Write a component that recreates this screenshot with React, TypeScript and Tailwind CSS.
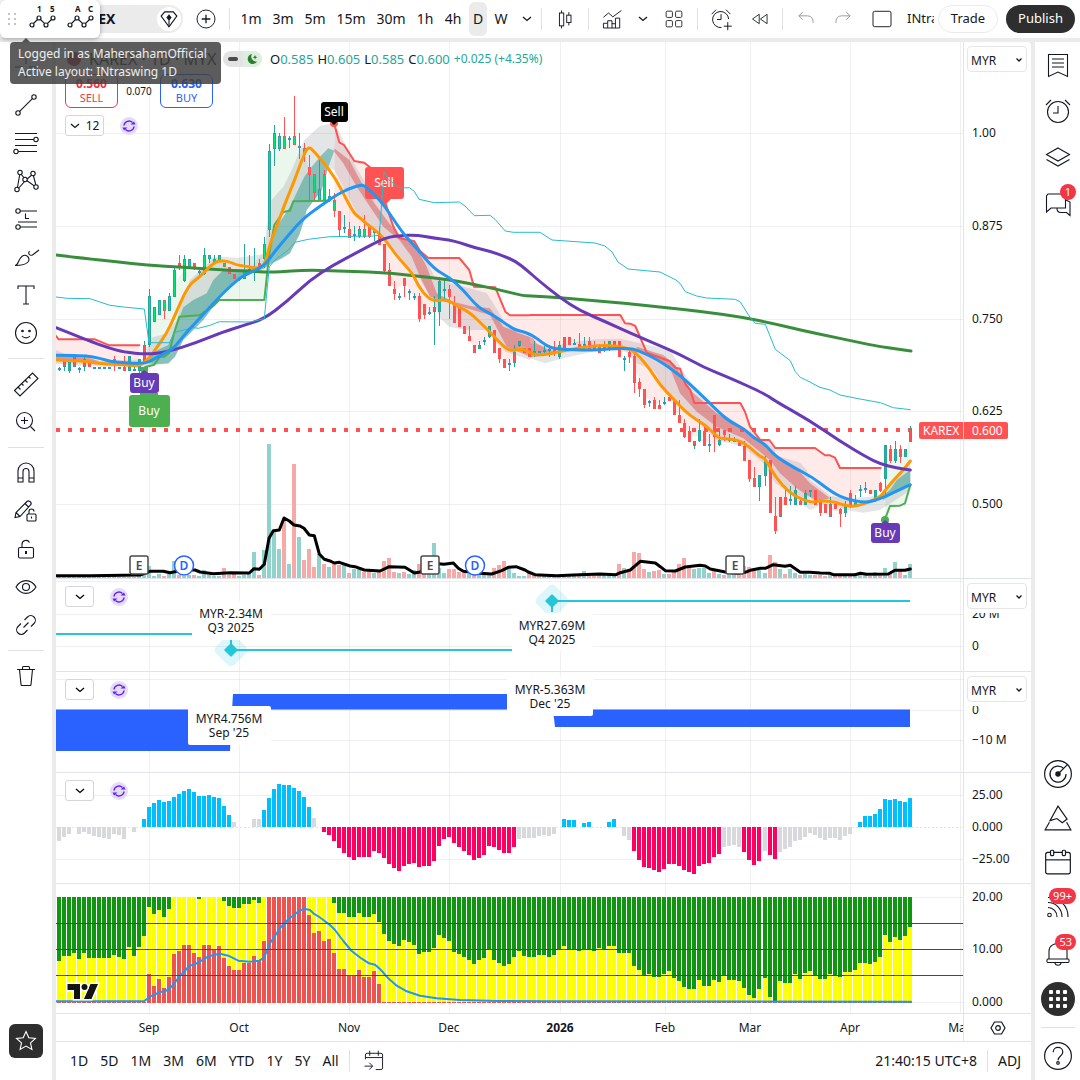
import type { ReactNode } from "react";

const BAR_COUNT = 171;

// Pixel column of a bar on the shared time scale
const barX = (i: number) => Math.floor(59.3 + i * 5.005);

// Points are stored in thirds of a pixel relative to an origin
function at(ox: number, oy: number, pts: string) {
  return pts
    .split(" ")
    .map(p => {
      const [x, y] = p.split(",").map(Number);
      return `${(ox + x / 3).toFixed(1)},${(oy + y / 3).toFixed(1)}`;
    })
    .join(" ");
}

const join = (...parts: string[]) => parts.join(" ");
const reverse = (pts: string) => pts.split(" ").reverse().join(" ");

const MONTHS = [
  { label: "Sep", x: 149 },
  { label: "Oct", x: 239 },
  { label: "Nov", x: 349 },
  { label: "Dec", x: 449 },
  { label: "2026", x: 560, bold: true },
  { label: "Feb", x: 665 },
  { label: "Mar", x: 750 },
  { label: "Apr", x: 850 },
  { label: "May", x: 960 },
];

// bar, high, low, body top, body bottom, border + fill (b = doji)
const CANDLES: { oy: number; rows: string }[] = [
  {
    oy: 230,
    rows: `0 412 424 413 418 b;1 388 424 388 412 tr;2 388 430 388 424 tr;3 375 412 378 412 tr;4 412 430 414 420 b;5 380 424 388 412 tr;6 400 412 400 412 rr;
7 411 413 410 414 b;8 411 413 410 414 b;9 411 413 410 414 b;10 411 413 410 414 b;11 378 422 388 400 rr;12 411 413 410 414 b;13 378 424 412 424 rr;14 378 424 378 424 tr;
15 404 424 416 420 b;16 388 430 388 424 tr;17 333 402 346 400 tr;18 178 352 198 346 tg;19 232 277 232 277 tg;20 210 256 210 256 tg;21 210 266 210 244 rg;22 190 244 198 244 tg;
23 112 200 121 200 tg;24 75 120 99 115 rr;25 75 155 87 154 tg;26 87 112 87 112 tg;27 99 120 99 112 rr;28 120 142 122 128 b;29 54 135 75 133 tg;30 75 99 76 88 tg;
31 75 102 87 99 tg;32 75 90 75 90 tg;33 99 112 99 112 rg;34 112 133 112 133 rg;35 133 146 133 146 rr;36 144 152 144 150 tg;37 42 146 121 146 tg;38 75 130 118 123 b;
39 54 153 110 115 b;40 87 120 99 112 rr;41 20 115 42 87 tg`,
  },
  {
    oy: 80,
    rows: `42 192 470 213 450 tg;43 135 258 160 206 tg;44 160 212 168 206 tg;45 112 208 168 206 rg;46 168 204 175 181 b;47 48 196 168 194 rg;48 158 236 199 205 b;49 190 246 205 226 rg;
50 226 360 260 284 rg;51 282 360 282 338 rg;52 236 362 328 362 tg;53 270 362 282 360 rg;54 328 366 348 362 tg;55 338 412 360 394 rg;56 394 470 394 450 rg;57 405 458 440 446 b;
58 425 474 447 473 rg;59 438 482 463 469 b;60 438 474 447 472 tg;61 405 474 447 472 rg;62 436 474 436 472 rg;63 447 482 447 458 tg;64 440 494 460 494 rg;65 492 582 492 572 rr;
66 548 617 570 617 rr;67 603 660 627 642 rr;68 638 660 647 653 b;69 594 650 594 618 rr;70 628 660 633 639 b;71 638 660 647 653 b;72 638 725 648 718 rr;73 672 718 672 706 rr;
74 682 706 697 703 b;75 648 795 682 695 tr;76 592 738 604 695 tr;77 600 660 627 633 b;78 616 716 628 652 rr;79 648 730 672 728 rr;80 682 740 682 740 rr;81 738 762 738 762 rr;
82 738 784 768 784 rr;83 795 818 795 818 rr;84 783 806 795 806 tr;85 772 795 781 787 b;86 738 774 738 772 tr;87 750 820 750 818 rr;88 804 850 804 838 rr;89 838 864 838 864 rr;
90 838 872 849 855 b;91 795 862 816 850 tr;92 783 802 783 797 tr;93 804 818 804 818 rr;94 804 830 804 830 rr`,
  },
  {
    oy: 280,
    rows: `95 183 230 213 219 b;96 213 219 213 219 b;97 198 220 210 216 b;98 196 230 207 213 b;99 183 228 205 218 rr;100 183 236 196 230 tr;101 170 216 172 214 tr;102 172 196 172 196 rr;
103 178 196 190 196 b;104 159 214 193 208 rr;105 172 208 193 199 b;106 172 214 183 208 rr;107 183 214 196 206 rr;108 193 220 198 218 rr;109 183 215 196 207 rr;110 183 214 183 207 tr;
111 183 210 183 207 tr;112 183 230 183 230 rr;113 228 272 233 239 b;114 205 248 216 230 rr;115 218 338 228 308 rr;116 294 350 306 328 rr;117 328 384 328 374 rr;118 360 382 363 369 b;
119 350 386 360 386 rr;120 360 386 374 386 rr;121 350 375 365 371 b;122 350 362 350 362 rr;123 360 406 360 406 rr;124 360 430 405 430 rr;125 418 474 430 472 rr;126 438 486 452 486 rr;
127 483 506 483 497 tr;128 418 486 450 484 tr;129 440 497 452 497 rr;130 462 516 491 497 b;131 405 516 405 472 rr;132 450 497 480 496 tr;133 450 482 450 465 rr;134 462 486 477 483 b;
135 472 486 479 485 b;136 482 497 482 497 rr;137 484 542 497 542 rr;138 540 605 540 597 rr;139 560 620 594 620 rr;140 585 662 585 620 tr;141 528 618 540 587 tr;142 540 700 540 698 rr;
143 652 762 708 752 rr;144 652 712 652 710 tr;145 618 675 652 674 rr;146 618 675 657 663 b;147 618 675 630 674 tr;148 652 675 664 674 rr;149 630 675 640 674 tr;150 630 650 631 637 b;
151 630 674 630 674 rr;152 664 708 664 698 rr`,
  },
  {
    oy: 380,
    rows: `153 372 400 372 400 rr;154 350 410 372 410 tr;155 372 388 372 388 rr;156 384 440 388 402 rr;157 362 412 375 398 tr;158 330 385 340 382 rr;159 345 375 362 374 tr;160 316 350 326 332 b;
161 306 340 325 331 b;162 330 342 330 342 rr;163 330 365 330 364 tr;164 305 335 308 332 rr;165 195 352 196 296 tr;166 195 250 208 242 rr;167 183 250 208 242 tr;168 195 250 208 232 rr;
169 206 230 208 230 tr;170 138 185 148 185 tr`,
  },
];

// Volume heights; negative values are down bars
const VOLUME = [
  1, 1, 1, 2, 1, 1, -1, 1, 1, 1, 1, -2, 1, -1, 1, 1, 2, 3, 12, 2, 4, -2, 4, 17, -3, 2, 3, -3, 2, 8, 3, 2, 2, -10, -3, -4, 2, 3, 4, 26, -3, 28,
  134, 46, 29, -58, 14, -114, 41, -18, -29, -11, 24, -14, 11, -14, -13, 13, -5, 9, 9, -6, -7, 5, -7, -17, -20, -6, 5, -6, 4, 8, -14, -6, 8, 35,
  10, 5, -9, -9, -6, -5, 4, -3, 3, 4, 4, -10, -13, -17, 10, 5, 2, 2, -5, -5, -3, 2, 2, -3, 2, 3, -3, 2, -3, 7, -3, -4, -5, 3, 5, 4, -14, 10,
  -8, -26, -25, -9, 6, -7, -8, 4, -4, -8, -14, -20, -10, 9, 10, 10, 5, -9, 4, -3, 3, 3, -6, -12, -11, -8, 8, 5, -23, -16, 9, -4, 9, 5, -3, 4,
  3, -3, -3, -2, 3, -3, -2, 4, -3, 3, 5, 3, -2, 6, -4, 10, -4, 16, -8, 3, 14,
];

const MOMENTUM = [
  -14, -10, -7, 0, -7, -5, -7, -9, -10, -11, -12, -7, -8, -12, 0, -5, 0, 8, 20, 24, 27, 25, 26, 30, 33, 36, 38, 35, 31, 31, 32, 30, 29, 21, 12,
  5, 0, 0, 0, 8, 8, 17, 29, 38, 43, 42, 42, 39, 36, 30, 20, 9, 0, -5, -8, -14, -21, -26, -30, -33, -30, -30, -30, -24, -26, -31, -37, -41, -44,
  -39, -37, -36, -40, -39, -39, -34, -19, -12, -10, -16, -20, -24, -28, -33, -31, -28, -19, -20, -23, -26, -26, -20, -12, -11, -11, -11, -9,
  -8, -9, -7, 0, 8, 7, 7, 0, 4, 5, 0, 0, 0, 5, 8, 0, -9, -13, -24, -33, -40, -41, -43, -45, -42, -37, -37, -39, -43, -45, -47, -39, -37, -36,
  -30, -27, -20, -19, -18, -20, -25, -33, -38, -34, -24, -28, -32, -25, -22, -20, -14, -13, -10, -6, -8, -11, -13, -11, -11, -13, -9, -7, 0, 5,
  11, 11, 13, 18, 28, 27, 28, 26, 25, 29,
];

// Ranges of bars drawn in the neutral colour
const NEUTRAL: [number, number][] = [
  [0, 16], [35, 40], [51, 52], [92, 99], [113, 114], [133, 136], [141, 141], [144, 158],
];

const BANKER_TOP = [
  573, 558, 558, 549, 567, 549, 564, 564, 564, 564, 564, 555, 561, 567, 531, 558, 531, 498, 411, 432, 420, 441, 417, 381, 381, 381, 381, 381,
  387, 381, 381, 381, 381, 393, 408, 414, 414, 402, 402, 390, 399, 381, 381, 381, 381, 381, 381, 381, 381, 381, 381, 381, 381, 381, 381, 399,
  429, 429, 441, 441, 429, 441, 441, 432, 456, 492, 513, 522, 528, 510, 516, 525, 552, 546, 546, 534, 495, 504, 513, 546, 552, 561, 570, 582,
  570, 564, 540, 570, 579, 588, 582, 561, 543, 558, 561, 561, 555, 555, 561, 555, 540, 528, 540, 540, 543, 540, 540, 543, 534, 540, 528, 528,
  549, 549, 549, 588, 600, 615, 612, 621, 621, 612, 603, 624, 633, 651, 657, 657, 630, 648, 648, 630, 636, 618, 630, 630, 633, 654, 675, 684,
  657, 624, 681, 693, 633, 639, 639, 612, 627, 609, 603, 615, 627, 627, 612, 615, 621, 606, 606, 600, 579, 579, 582, 576, 561, 495, 516, 501,
  510, 498, 471,
];

// Starts at bar 18, everything outside sits on the floor
const HOT_TOP = [
  612, 648, 627, 654, 621, 552, 543, 525, 525, 549, 561, 525, 525, 540, 528, 564, 588, 600, 600, 579, 579, 558, 573, 513, 381, 381, 381, 381,
  381, 381, 381, 381, 435, 489, 483, 513, 507, 549, 597, 597, 615, 615, 600, 621, 621, 603, 642,
];

const RED_TREND = join(
  at(240, 80, "285,140 298,187 312,195 343,243 373,248 390,262 415,310 440,380 460,440 478,474 523,484 540,513 565,534 658,534 688,570 702,620 766,622 796,695 810,706 870,706"),
  at(530, 280, "0,105 271,105 285,130 301,131 316,138 350,218 420,244 436,263 450,266 466,312 481,330 493,369 631,369 645,395 660,440 691,480 718,480 736,504 840,504"),
  at(720, 380, "285,204 315,226 330,226 345,233 360,264 482,264"),
);
const RED_TREND_EARLY = at(50, 230, "18,318 26,328 135,328 178,346 268,346");
const GREEN_TREND = join(
  at(50, 230, "285,412 298,408 313,404 330,380 343,380 358,368 372,310 388,260 448,256 475,238 490,228 508,210 643,210"),
  at(240, 80, "88,520 103,435 130,396 150,392 160,364 268,362"),
);
const GREEN_TREND_LATE = at(720, 380, "496,415 510,378 540,377 555,370 571,316");

const PRICE_DOWN = join(
  at(240, 80, "283,380 298,420 330,450 418,470 433,530 448,590 463,635 493,605 523,650 538,680 568,700 583,700 600,640 628,640 643,690 673,750 703,805 736,785 751,755 766,785 796,850 811,850 841,790 870,815"),
  at(530, 280, "31,216 91,213 120,185 180,196 271,205 301,225 316,268 346,350 376,372 421,356 451,417 481,470 511,468 541,492 600,478 631,488 661,568 691,603 706,564 721,620 736,730 766,663 796,652 856,650 886,685"),
  at(720, 380, "330,390 361,395 391,360 421,330 466,345 481,320"),
);
const PRICE_UP = join(
  at(50, 230, "285,370 298,260 328,235 358,220 373,160 403,120 448,125 478,80 508,82 553,140 598,115 643,65"),
  at(240, 80, "88,330 103,185 163,180 193,215 208,270 238,340 268,355"),
);

const CLOUD_UPPER = join(
  at(50, 230, "18,360 60,378 150,392 285,388 300,325 350,310 380,270 395,215 420,150 460,115 490,85 520,80 560,84 643,72"),
  at(240, 80, "90,365 130,320 155,270 193,180 240,138 283,128 310,180 350,265 390,330 440,390 480,465 523,480 550,520 583,590 630,610 700,628 740,640 760,670 790,720 830,760 870,770"),
  at(530, 280, "0,190 60,200 140,185 200,178 270,176 310,185 420,210 470,290 500,330 560,390 640,440 700,480 736,505"),
  at(720, 380, "165,225 240,248 260,270 270,300 330,348 380,355 435,352 490,345 510,320 540,285 571,255"),
);
const CLOUD_LOWER = join(
  at(50, 230, "18,402 150,410 285,414 320,404 355,402 375,380 400,330 460,270 520,190 560,150 643,118"),
  at(240, 80, "73,565 95,552 125,537 150,520 178,465 193,420 200,390 245,330 265,265 283,270 320,340 350,400 418,460 470,520 540,600 583,670 600,715 628,740 680,750 736,750 796,815 870,840"),
  at(530, 280, "0,235 45,250 100,235 200,212 300,215 320,250 370,270 400,320 440,370 500,425 560,480 640,500 700,550 736,610"),
  at(720, 380, "200,330 240,370 270,390 320,368 380,390 430,398 480,390 520,365 571,330"),
);

const TEAL_BAND = join(
  at(50, 230, "298,372 355,345 400,232 430,210 470,190 490,150 520,120 560,118 630,118"),
  at(240, 80, "73,560 110,440 150,380 193,290 215,260 240,230 265,205 283,212 265,262 245,330 200,390 193,420 178,465 150,520 125,535 95,550 73,565"),
  at(50, 230, "600,130 560,148 520,190 460,270 400,330 375,380 355,400 320,403 298,400"),
);
const TEAL_BAND_LATE = at(720, 380, "481,350 510,330 530,300 571,270 571,308 530,335 490,360");
const RED_BAND = join(
  at(240, 80, "283,205 328,240 360,300 400,365 440,420 478,468 523,490 560,560 590,640 640,665 690,678 750,685 790,740 880,775"),
  at(530, 280, "20,190 60,212 100,212 60,225 0,232"),
  at(240, 80, "870,830 800,800 750,705 690,688 600,660 570,650 540,590 515,530 478,480 430,440 390,380 350,320 310,250 283,215"),
);
const RED_BAND_MID = at(530, 280, "320,200 400,225 436,255 480,330 560,400 640,445 700,490 740,525 800,565 840,610 900,655 860,664 800,625 750,580 720,540 640,475 560,440 500,395 450,340 420,265 380,240 320,210");

const GREEN_MA = join(
  at(50, 230, "18,75 100,85 200,95 290,106 400,112 500,119 600,124 660,127"),
  at(240, 80, "155,573 215,570 330,574 440,578 520,587 620,598 700,613 780,630 850,647"),
  at(530, 280, "0,48 90,53 180,61 280,69 400,82 520,95 640,112 740,133 820,152 900,169 980,186 1050,200 1100,207 1143,213"),
);
const PURPLE_MA = join(
  at(50, 230, "18,293 60,310 130,337 180,355 220,366 290,373 350,366 440,338 520,305 580,287 643,266"),
  at(240, 80, "140,665 210,600 280,555 350,518 418,482 450,470 480,467 530,465 580,474 628,480 660,488 700,502 755,515 790,528 826,543 860,570"),
  at(530, 280, "24,0 90,53 150,92 230,127 300,159 380,193 450,223 520,262 600,294"),
  at(720, 380, "136,42 165,63 270,122 360,184 440,232 481,252 530,264 571,270"),
);
const BLUE_MA = join(
  at(50, 230, "18,376 100,376 150,385 190,397 285,401 310,388 350,367 374,352 400,318 430,285 460,253 520,188 568,145 595,130 643,108"),
  at(240, 80, "100,520 150,460 193,412 260,365 295,342 325,327 360,315 375,317 420,360 450,402 490,462 530,505 583,568 628,592 670,630 715,683 760,705 820,748 850,755"),
  at(530, 280, "0,163 20,175 50,198 80,208 190,211 240,206 300,205 320,210 380,237 450,285 520,350"),
  at(720, 380, "0,100 30,125 75,148 100,173 136,193 165,228 225,265 275,290 330,332 370,355 435,369 480,357 530,333 571,314"),
);
const ORANGE_MA = join(
  at(50, 230, "18,389 60,392 100,393 150,401 230,405 270,408 298,385 315,360 350,310 373,260 415,165 445,145 493,96 520,92 540,96 560,105 583,108 610,114 643,112"),
  at(240, 80, "90,490 110,440 135,370 165,298 193,220 206,200 220,212 268,268 300,320 340,398 358,412 380,432 418,460 440,486 470,528 518,580 533,615 560,650 583,664 620,658 655,680 690,698 736,742 770,778 800,808 820,812 850,807"),
  at(530, 280, "0,218 20,226 60,222 120,208 210,195 275,200 310,212 330,232 360,268 390,315 430,356 466,395 500,420 525,435 560,468"),
  at(720, 380, "0,175 65,180 120,230 136,235 165,290 211,342 270,368 300,362 345,366 370,376 405,380 440,368 481,352 496,330 530,290 550,270 571,243"),
);
const CYAN_LINE = join(
  at(50, 230, "18,201 50,205 120,206 180,226 220,231 283,237 297,338 358,338 375,307 430,293 445,295 480,286 508,275 600,276 643,266"),
  at(240, 80, "88,560 105,540 145,510 165,487 205,478 270,470 400,468 418,466 432,276 445,298 478,324 508,323 523,334 537,358 583,368 658,366 675,378 703,407 750,406 765,418 796,453 820,457 900,457"),
  "552,240 595,243 605,246 612,252 618,262 628,269 660,272",
  at(530, 280, "438,0 450,10 466,35 500,48 530,54 616,58 631,66 660,112 676,130 706,133 736,208 781,242 796,275 811,292"),
  at(720, 380, "258,0 300,22 330,30 360,45 420,57 481,68 520,83 571,89"),
);
const VOLUME_MA = join(
  at(50, 230, "18,1037 120,1037 270,1035 300,1024 340,1024 360,1028 400,1020 435,1020 450,1026 490,1031 540,1028 598,1029 612,1016 628,1018 643,1003 657,925 670,902 688,900 702,864 718,873 732,885 750,888"),
  at(300, 280, "12,745 28,765 43,767 58,822 73,838 88,842 103,849 118,847 150,858 165,860 193,870 240,873 268,860 315,862 343,879 360,876 400,850 432,853 460,849 475,865 490,874 540,880 575,882 605,872 625,862 648,860 675,870 685,876"),
  at(530, 280, "15,884 80,887 130,885 210,882 258,884 271,878 301,870 331,844 376,849 391,860 406,872 436,873 466,861 510,856 526,858 541,867 586,876 620,880"),
  at(720, 380, "75,577 91,571 121,565 136,565 160,554 195,559 211,556 241,577 270,577 301,579 330,580 340,584 405,584 421,580 440,583 505,582 525,571 555,571 571,567"),
);
const HOT_LINE = at(50, 770, "18,694 282,694 300,680 330,666 345,664 360,655 390,618 418,588 445,578 470,562 490,555 510,551 535,557 565,572 600,575 628,572 642,563 660,520 690,475 715,448 740,428 762,416 780,420 790,430 808,441 840,465 855,480 880,513 905,543 935,566 957,580 975,584 990,597 1015,625 1040,647 1070,664 1110,677 1160,685 1230,690 1340,693 1500,694 2583,695");

const TEAL = "#26a69a";
const RED = "#ff5252";

/* ---------- icons ---------- */

function Icon({ children, size = 28 }: { children: ReactNode; size?: number }) {
  return (
    <svg width={size} height={size} viewBox="0 0 28 28" fill="none" stroke="currentColor" strokeWidth="1.1" aria-hidden="true">
      {children}
    </svg>
  );
}

function Chevron() {
  return (
    <svg width="10" height="10" viewBox="0 0 10 10" fill="none" stroke="currentColor" strokeWidth="1.3" aria-hidden="true">
      <path d="M1 3l4 3.5L9 3" />
    </svg>
  );
}

const DRAW_TOOLS: { name: string; icon: ReactNode }[][] = [
  [
    { name: "Cross", icon: <path d="M14 3v8M14 17v8M3 14h8M17 14h8" /> },
    { name: "Trend line", icon: <><circle cx="22" cy="6" r="2.2" /><circle cx="6" cy="22" r="2.2" /><path d="M20.4 7.6L7.6 20.4" /></> },
    { name: "Fib retracement", icon: <><path d="M3 4.5h22M3 10.5h19M3 16.5h22M6 22.5h19" /><circle cx="24" cy="10.5" r="2.2" fill="white" /><circle cx="4" cy="22.5" r="2.2" fill="white" /></> },
    { name: "Patterns", icon: <><path d="M5 23L8 6l6 7 7-6 3.5 13.5L14 13 5 23" /><circle cx="5" cy="22.5" r="2.2" fill="white" /><circle cx="8" cy="5.5" r="2.2" fill="white" /><circle cx="13" cy="12.5" r="2.2" fill="white" /><circle cx="21" cy="6.5" r="2.2" fill="white" /><circle cx="24" cy="20" r="2.2" fill="white" /></> },
    { name: "Projection", icon: <><path d="M8 6h17M8 22h17M6 17h19M13.5 8.5v5H17" /><circle cx="6" cy="6" r="2.2" fill="white" /><circle cx="6" cy="22" r="2.2" fill="white" /></> },
    { name: "Brush", icon: <path d="M3 22.5c4 0 3-8 8.5-10 4-1 7 3 4.5 6.5-2.5 3-7 3.5-13 3.5zM17.5 8c-2 3 .5 5 3 4L27 7" /> },
    { name: "Text", icon: <path d="M6 8V5h16v3M14 5v18M11 23h6" /> },
    { name: "Icon", icon: <><circle cx="14" cy="14" r="10.5" /><path d="M10 17c2 2.500 6 2.500 8 0" /><circle cx="10.5" cy="12" r=".8" fill="currentColor" /><circle cx="17.5" cy="12" r=".8" fill="currentColor" /></> },
  ],
  [
    { name: "Measure", icon: <path d="M2.5 20.5L20.5 3l5.5 5.5L8 26zM6 17l2.5 2.5M9.5 13.5l2 2M13 10l2.5 2.5M16.5 6.5l2 2" /> },
    { name: "Zoom in", icon: <><circle cx="12.5" cy="12.5" r="8" /><path d="M18.5 18.5L23 23M12.5 9v7M9 12.5h7" /></> },
  ],
  [
    { name: "Magnet", icon: <path d="M6 23V12a8 8 0 0116 0v11h-5V12.5a3 3 0 00-6 0V23zM6 19h5M17 19h5" /> },
    { name: "Stay in drawing mode", icon: <><path d="M3 20.5l1-5L15 4.5c2-2 5.5 1.5 3.5 3.5L8 19.5zM13 6.500l3.5 3.5M4 15.5l4 4" /><rect x="15" y="17" width="9" height="7" rx="1" /><path d="M17 17v-2.5a2.5 2.5 0 015 0M19.5 19.5v2" /></> },
    { name: "Lock all", icon: <><rect x="6.5" y="12.5" width="15" height="10.5" rx="1.5" /><path d="M10 12.5v-3a4 4 0 017.5-2" /><path d="M14 16v3" strokeWidth="2" /></> },
    { name: "Hide all", icon: <><path d="M4 14c5-8.5 15-8.5 20 0-5 8.5-15 8.5-20 0z" /><circle cx="14" cy="14" r="3.5" /></> },
    { name: "Link", icon: <path d="M11.5 16.5l5-5M12.5 9l3-3a4.5 4.5 0 016.5 6.5l-3 3M15.5 19l-3 3A4.5 4.5 0 016 15.5l3-3" /> },
  ],
  [{ name: "Remove objects", icon: <path d="M5 7.5h18M10.5 7.5v-2a1 1 0 011-1h5a1 1 0 011 1v2M7.5 7.5L9 22.5a1 1 0 001 1h8a1 1 0 001-1l1.5-15" /> }],
];

const PANELS_TOP: { name: string; icon: ReactNode; badge?: string }[] = [
  { name: "Watchlist", icon: <path d="M4.500 3.500h19v22L14 21l-9.500 4.500zM8 8h12M8 12h12M8 16h12" /> },
  { name: "Alerts", icon: <><circle cx="14" cy="15" r="10.5" /><path d="M14 9v7H9M2 8l5-5M26 8l-5-5" /></> },
  { name: "Object tree", icon: <path d="M14 5l11.5 6.5L14 18 2.500 11.500zM2.500 16.500L14 23l11.500-6.500" /> },
  { name: "Chats", icon: <path d="M4 5h15.500a2 2 0 012 2v12H7l-4.500 4V7zM13 19.500c0 3 2 4 4 4h5.500l3.500 3V13l-4-2" />, badge: "1" },
];

const PANELS_MID: { name: string; icon: ReactNode }[] = [
  { name: "Screener", icon: <><circle cx="14" cy="14" r="12.500" /><path d="M19.500 9A7.500 7.500 0 1021.500 14M14 14l9-9" /><circle cx="14" cy="14" r="2" fill="currentColor" /></> },
  { name: "Pine", icon: <path d="M14 3l8.500 12-4.500 3.500-5-4-6.500 2zM6 18L2 25h24l-4-7" /> },
  { name: "Calendar", icon: <><rect x="2.500" y="5" width="23" height="20" rx="2" /><path d="M2.500 12h23" /><rect x="7" y="3" width="3" height="5" rx="1" fill="white" /><rect x="18" y="3" width="3" height="5" rx="1" fill="white" /></> },
];

function Refresh() {
  return (
    <span className="flex size-[18px] items-center justify-center rounded-full bg-[#e4dcf5]">
      <svg width="14" height="14" viewBox="0 0 14 14" fill="none" stroke="#651fff" strokeWidth="1.4" aria-hidden="true">
        <path d="M2 6.5A5 5 0 0110.5 3.500M12 7.500A5 5 0 013.500 10.500" />
        <path d="M8.500 5.500h5L12 2.500zM5.500 8.500H.5L2 11.500z" fill="#651fff" stroke="none" />
      </svg>
    </span>
  );
}

function TopButton({ label, className, children }: { label: string; className: string; children: ReactNode }) {
  return (
    <button aria-label={label} className={`flex h-[34px] shrink-0 items-center justify-center ${className}`}>
      {children}
    </button>
  );
}

const Divider = () => <span className="h-[22px] w-px shrink-0 bg-[#e0e0e0]" />;

/* ---------- top bar ---------- */

const INTERVALS = [
  { label: "1m", className: "w-8" },
  { label: "3m", className: "w-8" },
  { label: "5m", className: "w-8" },
  { label: "15m", className: "w-10" },
  { label: "30m", className: "w-10" },
  { label: "1h", className: "w-7" },
  { label: "4h", className: "w-7" },
  { label: "D", className: "mx-0.5 w-[18px] rounded-md bg-[#ebebeb]" },
  { label: "W", className: "w-6" },
];

function TopBar() {
  return (
    <header className="flex h-[38px] shrink-0 items-center bg-white text-[#131722]">
      <div className="flex h-7 w-[183px] shrink-0 items-center justify-between rounded-r-full bg-[#ebebeb] pr-0.5 pl-[70px]">
        <span className="text-sm font-bold">KAREX</span>
        <span className="flex size-6 items-center justify-center rounded-full bg-white">
          <Icon size={20}>
            <path d="M8 4h12l5 6-11 15L3 10z" strokeWidth="1.600" />
            <path d="M14 24v-8" strokeWidth="1.500" />
            <path d="M14 8l3 4-3 4-3-4z" fill="currentColor" />
          </Icon>
        </span>
      </div>
      <TopButton label="Compare" className="w-[46px]">
        <Icon size={24}><circle cx="14" cy="14" r="10.500" /><path d="M14 9v10M9 14h10" strokeWidth="1.500" /></Icon>
      </TopButton>
      <Divider />
      <div className="ml-[5px] flex text-sm">
        {INTERVALS.map(i => (
          <button key={i.label} className={`h-[34px] shrink-0 text-center ${i.className}`}>{i.label}</button>
        ))}
      </div>
      <TopButton label="More intervals" className="w-7"><Chevron /></TopButton>
      <Divider />
      <TopButton label="Candles" className="w-[46px]">
        <Icon size={24}><path d="M10 4v3M10 22v3M18.500 6v3.500M18.500 18v3.500" /><rect x="7.500" y="7" width="5" height="15" /><rect x="16" y="9.500" width="5" height="8.500" /></Icon>
      </TopButton>
      <Divider />
      <TopButton label="Indicators" className="w-[46px]">
        <Icon size={24}><path d="M4 12l6-5 5 4.500L25 4M4 24.500V19h5v-3h5v3.500h4V13h5v11.500zM9 19v5.500M14 19v5.500M18 19v5.500" /></Icon>
      </TopButton>
      <TopButton label="Favorite indicators" className="w-4"><Chevron /></TopButton>
      <TopButton label="Indicator templates" className="w-[46px]">
        <Icon size={22}><rect x="4" y="4" width="8" height="8" rx="1.500" /><rect x="16" y="4" width="8" height="8" rx="1.500" /><rect x="4" y="16" width="8" height="8" rx="1.500" /><rect x="16" y="16" width="8" height="8" rx="1.500" /></Icon>
      </TopButton>
      <Divider />
      <TopButton label="Create alert" className="w-[46px]">
        <Icon size={25}><path d="M22 13.500a9 9 0 10-8 9.500M13.500 8v6H9M3 8l5-5M24 8l-5-5M21 17v9M16.500 21.500h9" /></Icon>
      </TopButton>
      <TopButton label="Replay" className="mr-1.5 w-8">
        <Icon size={22}><path d="M13 8v12l-8.500-6zM23 8v12l-8.500-6z" /></Icon>
      </TopButton>
      <Divider />
      <TopButton label="Undo" className="w-[46px] text-[#8c8c8c]"><Icon size={22}><path d="M10 5l-5 5 5 5M5 10h11c4 0 7 3 7 7v2" /></Icon></TopButton>
      <TopButton label="Redo" className="w-7 text-[#8c8c8c]"><Icon size={22}><path d="M18 5l5 5-5 5M23 10H12c-4 0-7 3-7 7v2" /></Icon></TopButton>
      <TopButton label="Layout" className="w-[50px]"><Icon size={24}><rect x="3.500" y="5" width="21" height="18" rx="2" /></Icon></TopButton>
      <span className="min-w-0 flex-1 overflow-hidden text-[13px] whitespace-nowrap">INtraswing</span>
      <button className="ml-1 h-7 w-[60px] shrink-0 rounded-full border border-[#ebebeb] text-[13px]">Trade</button>
      <button className="mr-[5px] ml-2 h-7 w-[69px] shrink-0 rounded-full bg-[#2e2e2e] text-[13px] text-white">Publish</button>
    </header>
  );
}

function FavoritesPanel() {
  return (
    <div className="absolute top-0 left-0 flex h-[38px] w-[100px] items-center rounded-md bg-white pl-2 text-[#131722] shadow-[0_1px_5px_rgba(0,0,0,0.35)]">
      <svg width="10" height="14" viewBox="0 0 10 14" fill="#c4c4c4" aria-hidden="true">
        {[1, 6, 11].map(y => [0, 6].map(x => <rect key={`${x}${y}`} x={x} y={y} width="2" height="2" />))}
      </svg>
      {[["1", "5"], ["A", "C"]].map(([a, b]) => (
        <button key={a} aria-label={`Wave ${a}${b}`} className="ml-2.5 h-[30px] w-7">
          <svg width="28" height="30" viewBox="0 0 28 30" fill="white" stroke="currentColor" strokeWidth="1.200" aria-hidden="true">
            <path d="M4 21l7-7 7 7 7-7" fill="none" />
            <circle cx="4" cy="21" r="2" /><circle cx="11" cy="14" r="2" /><circle cx="18" cy="21" r="2" /><circle cx="25" cy="14" r="2" />
            <text x="9" y="8" fontSize="8" fontWeight="700" fill="currentColor" stroke="none">{a}</text>
            <text x="22" y="8" fontSize="8" fontWeight="700" fill="currentColor" stroke="none">{b}</text>
          </svg>
        </button>
      ))}
    </div>
  );
}

function Tooltip() {
  return (
    <div role="tooltip" className="absolute top-[42px] left-2.5 w-[211px] rounded-sm bg-[#3f3f3f]/85 px-2 py-[3px] text-xs leading-[18px] whitespace-nowrap text-white/90">
      <span className="absolute -top-1 left-3 border-x-4 border-b-4 border-x-transparent border-b-[#3f3f3f]/85" />
      Logged in as MahersahamOfficial
      <br />
      Active layout: INtraswing 1D
    </div>
  );
}

/* ---------- panes ---------- */

function Grid({ ys }: { ys: number[] }) {
  return (
    <g stroke="#2e2e2e" strokeOpacity="0.07" shapeRendering="crispEdges">
      {MONTHS.map(m => <line key={m.label} x1={m.x + 0.5} x2={m.x + 0.5} y1="0" y2="1100" />)}
      {ys.map(y => <line key={y} x1="56" x2="3000" y1={y + 0.5} y2={y + 0.5} />)}
    </g>
  );
}

interface PaneProps {
  top: number;
  className: string;
  ticks: { label: string; y: number }[];
  grid: number[];
  currency?: boolean;
  tag?: boolean;
  legend?: ReactNode;
  children: ReactNode;
}

function Pane({ top, className, ticks, grid, currency, tag, legend, children }: PaneProps) {
  return (
    <section className={`flex border-b border-[#e0e3eb] ${className}`}>
      <div className="relative min-w-0 flex-1 overflow-hidden">
        <svg className="absolute inset-0 size-full">
          <g transform={`translate(-56 ${-top})`}>
            <Grid ys={grid} />
            {children}
          </g>
        </svg>
        {legend}
      </div>
      <div className="relative w-[68px] shrink-0 border-l border-[#e0e3eb]">
        <svg className="absolute inset-0 size-full overflow-visible">
          <g transform={`translate(-964 ${-top})`} fontSize="12" fill="#131722">
            {tag && (
              <>
                <rect x="919" y="422" width="89" height="17" rx="2" fill={RED} />
                <line x1="963.5" x2="963.5" y1="422" y2="439" stroke="white" strokeOpacity="0.6" />
                <text x="923" y="435" fill="white">KAREX</text>
                <text x="972" y="435" fill="white">0.600</text>
              </>
            )}
            {ticks.map(t => <text key={t.label} x="972" y={t.y + 4}>{t.label}</text>)}
          </g>
        </svg>
        {currency && (
          <div className="relative mx-[3px] mt-1 h-[26px] w-[60px] rounded border border-[#e6e6e6] bg-white shadow-[0_4px_0_white]">
            <select aria-label="Currency" className="size-full appearance-none bg-transparent px-[3px] pb-0.5 text-xs text-[#131722]">
              <option>MYR</option>
            </select>
            <svg className="pointer-events-none absolute top-[10px] right-1" width="6" height="6" viewBox="0 0 6 6" fill="none" stroke="#131722" strokeWidth="1.3" aria-hidden="true">
              <path d="M.5 1.5L3 4l2.5-2.500" />
            </svg>
          </div>
        )}
      </div>
    </section>
  );
}

function StudyLegend() {
  return (
    <div className="absolute top-[7px] left-[9px] flex items-center gap-4">
      <button aria-label="Toggle legend" className="flex h-[21px] w-[29px] items-center justify-center rounded-[3px] border border-[#d6d6d6] bg-white"><Chevron /></button>
      <Refresh />
    </div>
  );
}

const OHLC = [["O", "0.585"], ["H", "0.605"], ["L", "0.585"], ["C", "0.600"]];

function SymbolLegend() {
  return (
    <div className="absolute top-2 left-[9px] text-[#131722]">
      <div className="flex h-[18px] items-center whitespace-nowrap">
        <span className="mr-2 ml-0.5 size-3.5 rounded-full bg-[#b22833]" />
        <span className="w-[134px] text-base">KAREX · 1D · MYX</span>
        <span className="mr-2 flex h-4 w-[39px] overflow-hidden rounded-full">
          <span className="flex flex-1 items-center justify-center bg-[#e3e3e3]"><span className="h-1 w-2.5 rounded-full bg-[#4a4a4a]" /></span>
          <span className="flex flex-1 items-center justify-center bg-[#dcefdc]">
            <svg width="12" height="12" viewBox="0 0 12 12" fill="#2e7d32" aria-hidden="true">
              <path d="M6 1a5 5 0 105 7.500A5 5 0 016 1z" /><path d="M9 2l.7 1.600 1.600.7-1.600.7L9 6.500l-.7-1.500-1.500-.7 1.500-.7z" />
            </svg>
          </span>
        </span>
        <p className="flex items-center gap-1 text-[13px] leading-[18px]">
          {OHLC.map(([k, v]) => (
            <span key={k}>{k}<span className="text-[#26a69a]">{v}</span></span>
          ))}
          <span className="text-xs leading-[18px] text-[#26a69a]">+0.025 (+4.35%)</span>
        </p>
      </div>
      <div className="mt-1.5 flex items-center">
        <button className="h-[34px] w-[53px] rounded-md border border-[#f23645] bg-white pb-0.5 text-[11px] leading-[13px] text-[#f23645]"><b className="block text-xs leading-[14px]">0.560</b>SELL</button>
        <span className="w-[42px] text-center text-[10px]">0.070</span>
        <button className="h-[34px] w-[53px] rounded-md border border-[#2962ff] bg-white pb-0.5 text-[11px] leading-[13px] text-[#2962ff]"><b className="block text-xs leading-[14px]">0.630</b>BUY</button>
      </div>
      <div className="mt-[7px] flex items-center gap-4">
        <button className="flex h-[21px] w-[39px] items-center justify-center gap-1.5 rounded-[3px] border border-[#d6d6d6] bg-white text-xs"><Chevron />12</button>
        <Refresh />
      </div>
    </div>
  );
}

function Candles() {
  return (
    <g shapeRendering="crispEdges">
      {CANDLES.flatMap(({ oy, rows }) =>
        rows.split(";").map(row => {
          const [i, hi, lo, top, bottom, kind] = row.trim().split(" ");
          const x = barX(+i);
          const y = (v: string) => Math.round(oy + +v / 3);
          const line = kind[0] === "r" ? RED : TEAL;
          const bodyHeight = Math.max(y(bottom) - y(top), 2);
          return (
            <g key={i}>
              <rect x={x} y={y(hi)} width="1" height={Math.max(y(lo) - y(hi), 1)} fill={line} />
              {kind === "b" ? (
                <rect x={x - 1} y={y(top)} width="3" height="2" fill="#2f95c8" />
              ) : (
                <>
                  <rect x={x - 1} y={y(top)} width="3" height={bodyHeight} fill={line} />
                  <rect x={x} y={y(top) + 1} width="1" height={Math.max(bodyHeight - 2, 0)} fill={kind[1] === "g" ? "#00e676" : RED} />
                </>
              )}
            </g>
          );
        })
      )}
    </g>
  );
}

function Line({ points, color, width }: { points: string; color: string; width: number }) {
  return <polyline points={points} fill="none" stroke={color} strokeWidth={width} strokeLinejoin="round" strokeLinecap="round" />;
}

// Rounds the corners by running quadratic curves between segment midpoints
function Curve({ points, color, width }: { points: string; color: string; width: number }) {
  const p = points.split(" ").map(s => s.split(",").map(Number));
  let d = `M${p[0]}`;
  for (let i = 1; i < p.length - 1; i++) {
    d += `Q${p[i]} ${(p[i][0] + p[i + 1][0]) / 2},${(p[i][1] + p[i + 1][1]) / 2}`;
  }
  d += `L${p[p.length - 1]}`;
  return <path d={d} fill="none" stroke={color} strokeWidth={width} strokeLinecap="round" />;
}

function EventMark({ x, letter }: { x: number; letter: "E" | "D" }) {
  return (
    <g textAnchor="middle" fontSize="12">
      {letter === "E" ? (
        <rect x={x - 9} y="556" width="18" height="18" rx="2" fill="white" stroke="#4a4a4a" strokeWidth="1.5" />
      ) : (
        <circle cx={x} cy="565.5" r="9.5" fill="white" stroke="#2962ff" strokeWidth="1.5" />
      )}
      <text x={x} y="570" fill={letter === "E" ? "#4a4a4a" : "#2962ff"} fontWeight="600">{letter}</text>
    </g>
  );
}

function PricePane() {
  return (
    <Pane
      top={42}
      className="min-h-[537px] flex-1"
      grid={[133, 226, 319, 411, 504]}
      ticks={[{ label: "1.00", y: 133 }, { label: "0.875", y: 226 }, { label: "0.750", y: 319 }, { label: "0.625", y: 411 }, { label: "0.500", y: 504 }]}
      currency
      tag
      legend={<SymbolLegend />}
    >
      <g shapeRendering="crispEdges">
        {VOLUME.map((v, i) => (
          <rect key={i} x={barX(i) - 2} y={578 - Math.abs(v)} width="4" height={Math.abs(v)} fill={v > 0 ? "#92d2cc" : "#f7a9a7"} />
        ))}
      </g>

      <g fill={RED} fillOpacity="0.12">
        <polygon points={join(RED_TREND_EARLY, at(50, 230, "268,410 18,400"))} />
        <polygon points={join(RED_TREND, reverse(PRICE_DOWN))} />
      </g>
      <g fill="#4caf50" fillOpacity="0.11">
        <polygon points={join(PRICE_UP, reverse(GREEN_TREND))} />
        <polygon points={join(GREEN_TREND_LATE, at(720, 380, "571,165 556,218 526,225 496,246"))} />
      </g>

      <polygon points={join(CLOUD_UPPER, reverse(CLOUD_LOWER))} fill="#787b86" fillOpacity="0.2" />
      <g fill="#00897b" fillOpacity="0.4">
        <polygon points={TEAL_BAND} />
        <polygon points={TEAL_BAND_LATE} />
      </g>
      <g fill="#d32f2f" fillOpacity="0.38">
        <polygon points={RED_BAND} />
        <polygon points={RED_BAND_MID} />
        <polygon points={at(50, 230, "18,378 110,380 150,395 60,392 18,388")} />
      </g>

      <line x1="56" x2="912" y1="430" y2="430" stroke={RED} strokeWidth="4" strokeDasharray="4 8" />
      <Candles />
      <Line points={RED_TREND_EARLY} color={RED} width={2} />
      <Line points={RED_TREND} color={RED} width={2} />
      <Line points={GREEN_TREND} color="#4caf50" width={2} />
      <Line points={GREEN_TREND_LATE} color="#4caf50" width={2} />
      <circle cx="334" cy="123" r="4" fill={RED} />
      <circle cx="885" cy="520" r="4" fill="#4caf50" />
      <path d="M141 367h7v7h-7z" fill="#4caf50" />

      <g fontSize="12" fill="white" textAnchor="middle">
        <path d="M368 167h33a3 3 0 013 3v26a3 3 0 01-3 3h-10l-6 6-6-6h-11a3 3 0 01-3-3v-26a3 3 0 013-3z" fill={RED} />
        <text x="384" y="187">Sell</text>
        <path d="M132 395h8v-2h18v2h9a3 3 0 013 3v26a3 3 0 01-3 3h-35a3 3 0 01-3-3v-26a3 3 0 013-3z" fill="#4caf50" />
        <text x="149" y="415">Buy</text>
      </g>

      <Curve points={GREEN_MA} color="#388e3c" width={3} />
      <Curve points={ORANGE_MA} color="#ff9800" width={3} />
      <Curve points={PURPLE_MA} color="#673ab7" width={3} />
      <Line points={CYAN_LINE} color="#26bcd0" width={1} />
      <Curve points={BLUE_MA} color="#2196f3" width={3} />
      <Line points={VOLUME_MA} color="#000000" width={3} />

      <g fontSize="12" fill="white" textAnchor="middle">
        <path d="M324 102h21a3 3 0 013 3v14a3 3 0 01-3 3h-8l-3 3-3-3h-7a3 3 0 01-3-3v-14a3 3 0 013-3z" fill="black" />
        <text x="334" y="116">Sell</text>
        <path d="M133 373h8l3-3 4 3h8a3 3 0 013 3v14a3 3 0 01-3 3h-23a3 3 0 01-3-3v-14a3 3 0 013-3z" fill="#673ab7" />
        <text x="144" y="387">Buy</text>
        <path d="M874 523h8l3-3 4 3h8a3 3 0 013 3v14a3 3 0 01-3 3h-23a3 3 0 01-3-3v-14a3 3 0 013-3z" fill="#673ab7" />
        <text x="885" y="537">Buy</text>
      </g>

      <EventMark x={139} letter="E" />
      <EventMark x={184} letter="D" />
      <EventMark x={430} letter="E" />
      <EventMark x={475} letter="D" />
      <EventMark x={735} letter="E" />
    </Pane>
  );
}

function ValueLabel({ x, y, w, h, cx, lines }: { x: number; y: number; w: number; h: number; cx: number; lines: [string, string] }) {
  return (
    <g textAnchor="middle" fontSize="12" fill="#131722">
      <rect x={x} y={y} width={w} height={h} rx="2" fill="white" />
      <text x={cx} y={y + 17}>{lines[0]}</text>
      <text x={cx} y={y + 31}>{lines[1]}</text>
    </g>
  );
}

function Diamond({ x, y }: { x: number; y: number }) {
  return (
    <g fill="#26c6da">
      <rect x="-13" y="-13" width="26" height="26" rx="5" fillOpacity="0.16" transform={`translate(${x} ${y}) rotate(45)`} />
      <rect x="-5" y="-5" width="10" height="10" rx="1" transform={`translate(${x} ${y}) rotate(45)`} />
    </g>
  );
}

function IncomePane() {
  return (
    <Pane top={579} className="h-[93px] shrink-0" grid={[581, 614, 646]} ticks={[{ label: "20 M", y: 614 }, { label: "0", y: 646 }]} currency legend={<StudyLegend />}>
      <Diamond x={231} y={650} />
      <Diamond x={552} y={601} />
      <g stroke="#26c6da" strokeWidth="2">
        <path d="M56 634h136M231 640v10h281M552 612v-11h358" fill="none" />
      </g>
      <ValueLabel x={192} y={601} w={79} h={39} cx={231} lines={["MYR-2.34M", "Q3 2025"]} />
      <ValueLabel x={512} y={613} w={81} h={38} cx={552} lines={["MYR27.69M", "Q4 2025"]} />
    </Pane>
  );
}

function CashFlowPane() {
  return (
    <Pane top={672} className="h-[101px] shrink-0" grid={[679, 710, 740]} ticks={[{ label: "0", y: 710 }, { label: "−10 M", y: 740 }]} currency legend={<StudyLegend />}>
      <path d="M56 710h176l1-16h318l3 16h356v17H555l-2-17H232l-2 41H56z" fill="#2962ff" />
      <line x1="56" x2="910" y1="709.5" y2="709.5" stroke="#8ea9f5" />
      <ValueLabel x={188} y={706} w={83} h={39} cx={229} lines={["MYR4.756M", "Sep '25"]} />
      <ValueLabel x={507} y={677} w={86} h={39} cx={550} lines={["MYR-5.363M", "Dec '25"]} />
    </Pane>
  );
}

function MomentumPane() {
  const color = (v: number, i: number) => {
    if (NEUTRAL.some(([a, b]) => i >= a && i <= b)) return "#d8d9dd";
    return v > 0 ? "#00bfff" : "#ff0062";
  };
  return (
    <Pane top={773} className="h-[111px] shrink-0" grid={[795, 859]} ticks={[{ label: "25.00", y: 795 }, { label: "0.000", y: 827 }, { label: "−25.00", y: 859 }]} legend={<StudyLegend />}>
      <g shapeRendering="crispEdges">
        <line x1="56" x2="3000" y1="827.5" y2="827.5" stroke="#e4e5e8" strokeDasharray="2 2" />
        {MOMENTUM.map((v, i) => v !== 0 && (
          <rect key={i} x={barX(i) - 2} y={v > 0 ? 827 - v : 827} width="4" height={Math.abs(v)} fill={color(v, i)} />
        ))}
      </g>
    </Pane>
  );
}

function BankerPane() {
  return (
    <Pane top={884} className="h-[130px] shrink-0" grid={[897, 1002]} ticks={[{ label: "20.00", y: 897 }, { label: "10.00", y: 949 }, { label: "0.000", y: 1002 }]}>
      <g shapeRendering="crispEdges">
        {Array.from({ length: BAR_COUNT }, (_, i) => {
          const x = barX(i) - 2;
          const yellow = 770 + BANKER_TOP[i] / 3;
          const red = 770 + (HOT_TOP[i - 18] ?? 696) / 3;
          return (
            <g key={i}>
              <rect x={x} y="897" width="4" height={yellow - 897} fill="#109610" />
              <rect x={x} y={yellow} width="4" height={1003 - yellow} fill="#ffff00" />
              <rect x={x} y={red} width="4" height={1003 - red} fill="#ef5350" />
            </g>
          );
        })}
      </g>
      <Line points={HOT_LINE} color="#2196f3" width={2} />
      <g stroke="#7b1fa2" shapeRendering="crispEdges">
        <path d="M56 923.5h3000M56 949.5h3000M56 975.5h3000" />
      </g>
      <g fill="#131313" stroke="white" strokeWidth="3" paintOrder="stroke">
        <path d="M67.5 984H80v15h-6v-9h-6.500zM90.500 984H98l-6.500 15H84z" />
        <circle cx="84.5" cy="987" r="3" />
      </g>
    </Pane>
  );
}

function TimeAxis() {
  return (
    <div className="flex h-7 shrink-0 border-b border-[#e0e3eb]">
      <div className="relative min-w-0 flex-1 overflow-hidden">
        <svg className="absolute inset-0 size-full">
          <g transform="translate(-56 0)" fontSize="12" fill="#131722" textAnchor="middle">
            {MONTHS.map(m => <text key={m.label} x={m.x} y="18" fontWeight={m.bold ? 700 : 400}>{m.label}</text>)}
          </g>
        </svg>
      </div>
      <button aria-label="Chart settings" className="flex w-[68px] shrink-0 items-center justify-center border-l border-[#e0e3eb]">
        <svg width="16" height="16" viewBox="0 0 16 16" fill="none" stroke="#131722" strokeWidth="1.2" aria-hidden="true">
          <path d="M4.500 2h7L15 8l-3.500 6h-7L1 8z" /><circle cx="8" cy="8" r="2.300" />
        </svg>
      </button>
    </div>
  );
}

const RANGES = ["1D", "5D", "1M", "3M", "6M", "YTD", "1Y", "5Y", "All"];

function BottomBar() {
  return (
    <footer className="flex h-[38px] shrink-0 items-center pr-2.5 pl-[14px] text-sm text-[#131722]">
      <div className="flex gap-3">
        {RANGES.map(r => <button key={r}>{r}</button>)}
      </div>
      <span className="mr-3 ml-2.5 h-[22px] w-px bg-[#e0e0e0]" />
      <button aria-label="Go to date">
        <Icon size={24}><path d="M4 12V7a2 2 0 012-2h16a2 2 0 012 2v15a2 2 0 01-2 2h-6M4 10h20M9 2v6M19 2v6M3 20h9M8.500 16l4 4-4 4" /></Icon>
      </button>
      <button className="ml-auto">21:40:15 UTC+8</button>
      <span className="mx-2.5 h-[22px] w-px bg-[#e0e0e0]" />
      <button>ADJ</button>
    </footer>
  );
}

/* ---------- side bars ---------- */

function DrawingToolbar() {
  return (
    <nav className="flex w-[52px] shrink-0 flex-col items-center bg-white pt-1.5 text-[#131722]">
      {DRAW_TOOLS.map((group, g) => (
        <div key={g} className="flex flex-col items-center">
          {g > 0 && <span className="my-1.5 h-px w-9 bg-[#e0e0e0]" />}
          {group.map(t => (
            <button key={t.name} aria-label={t.name} className="flex h-[38px] w-[38px] items-center justify-center"><Icon>{t.icon}</Icon></button>
          ))}
        </div>
      ))}
      <button aria-label="Favorites" className="mt-auto mb-[22px] flex size-[34px] items-center justify-center rounded-md bg-[#2e2e2e] text-white">
        <Icon><path d="M14 4.500l2.800 6.200 6.700.7-5 4.500 1.400 6.600-5.900-3.400-5.900 3.400 1.400-6.600-5-4.500 6.700-.7z" /></Icon>
      </button>
    </nav>
  );
}

function Badge({ text }: { text: string }) {
  return <span className="absolute top-1 right-1 min-w-4 rounded-full bg-[#f23645] px-1 text-center text-[11px] leading-4 text-white">{text}</span>;
}

function WidgetBar() {
  return (
    <aside className="flex w-[45px] shrink-0 flex-col items-center bg-white pb-px text-[#131722]">
      {PANELS_TOP.map(p => (
        <button key={p.name} aria-label={p.name} className="relative flex h-[46px] w-full items-center justify-center">
          <Icon>{p.icon}</Icon>
          {p.badge && <Badge text={p.badge} />}
        </button>
      ))}
      <div className="mt-auto flex w-full flex-col items-center">
        {PANELS_MID.map(p => (
          <button key={p.name} aria-label={p.name} className="flex h-11 w-full items-center justify-center"><Icon size={30}>{p.icon}</Icon></button>
        ))}
        <button aria-label="News feed" className="relative flex h-[46px] w-full items-center justify-center">
          <Icon><circle cx="5.500" cy="22" r="1.800" /><path d="M4 14.500a9 9 0 019 9.500M4 9.500a14 14 0 0114 14.500M4 4.500a19 19 0 0120 19.500" /></Icon>
          <Badge text="99+" />
        </button>
        <button aria-label="Notifications" className="relative flex h-[46px] w-full items-center justify-center">
          <Icon><path d="M5 19.500V12c0-10 18-10 18 0v7.500M4 20h20c1.500 0 1.500 3.500 0 3.500H4C2.500 23.500 2.500 20 4 20zM11 24c.5 3 5.500 3 6 0" /></Icon>
          <Badge text="53" />
        </button>
        <button aria-label="Products" className="my-1.5 flex size-[34px] items-center justify-center rounded-full bg-[#2e2e2e]">
          <svg width="18" height="18" viewBox="0 0 18 18" fill="white" aria-hidden="true">
            {[0, 7, 14].map(y => [0, 7, 14].map(x => <rect key={`${x}-${y}`} x={x} y={y} width="4" height="4" rx="1" />))}
          </svg>
        </button>
        <span className="my-[5px] h-px w-[34px] bg-[#e0e0e0]" />
        <button aria-label="Help" className="flex h-[46px] w-full items-center justify-center">
          <Icon size={30}><circle cx="14" cy="14" r="12.500" /><path d="M9.500 10.500c0-6 9-6 9 0 0 3.500-4.500 3.500-4.500 7.500" /><circle cx="14" cy="20.500" r="1.200" /></Icon>
        </button>
      </div>
    </aside>
  );
}

export default function App() {
  return (
    <div className="relative flex min-h-screen flex-col gap-1 overflow-hidden bg-[#ebebeb] font-['Noto_Sans',sans-serif]">
      <TopBar />
      <div className="flex flex-1 gap-1">
        <DrawingToolbar />
        <main className="flex min-w-0 flex-1 flex-col rounded-t bg-white">
          <PricePane />
          <IncomePane />
          <CashFlowPane />
          <MomentumPane />
          <BankerPane />
          <TimeAxis />
          <BottomBar />
        </main>
        <WidgetBar />
      </div>
      <Tooltip />
      <FavoritesPanel />
    </div>
  );
}
